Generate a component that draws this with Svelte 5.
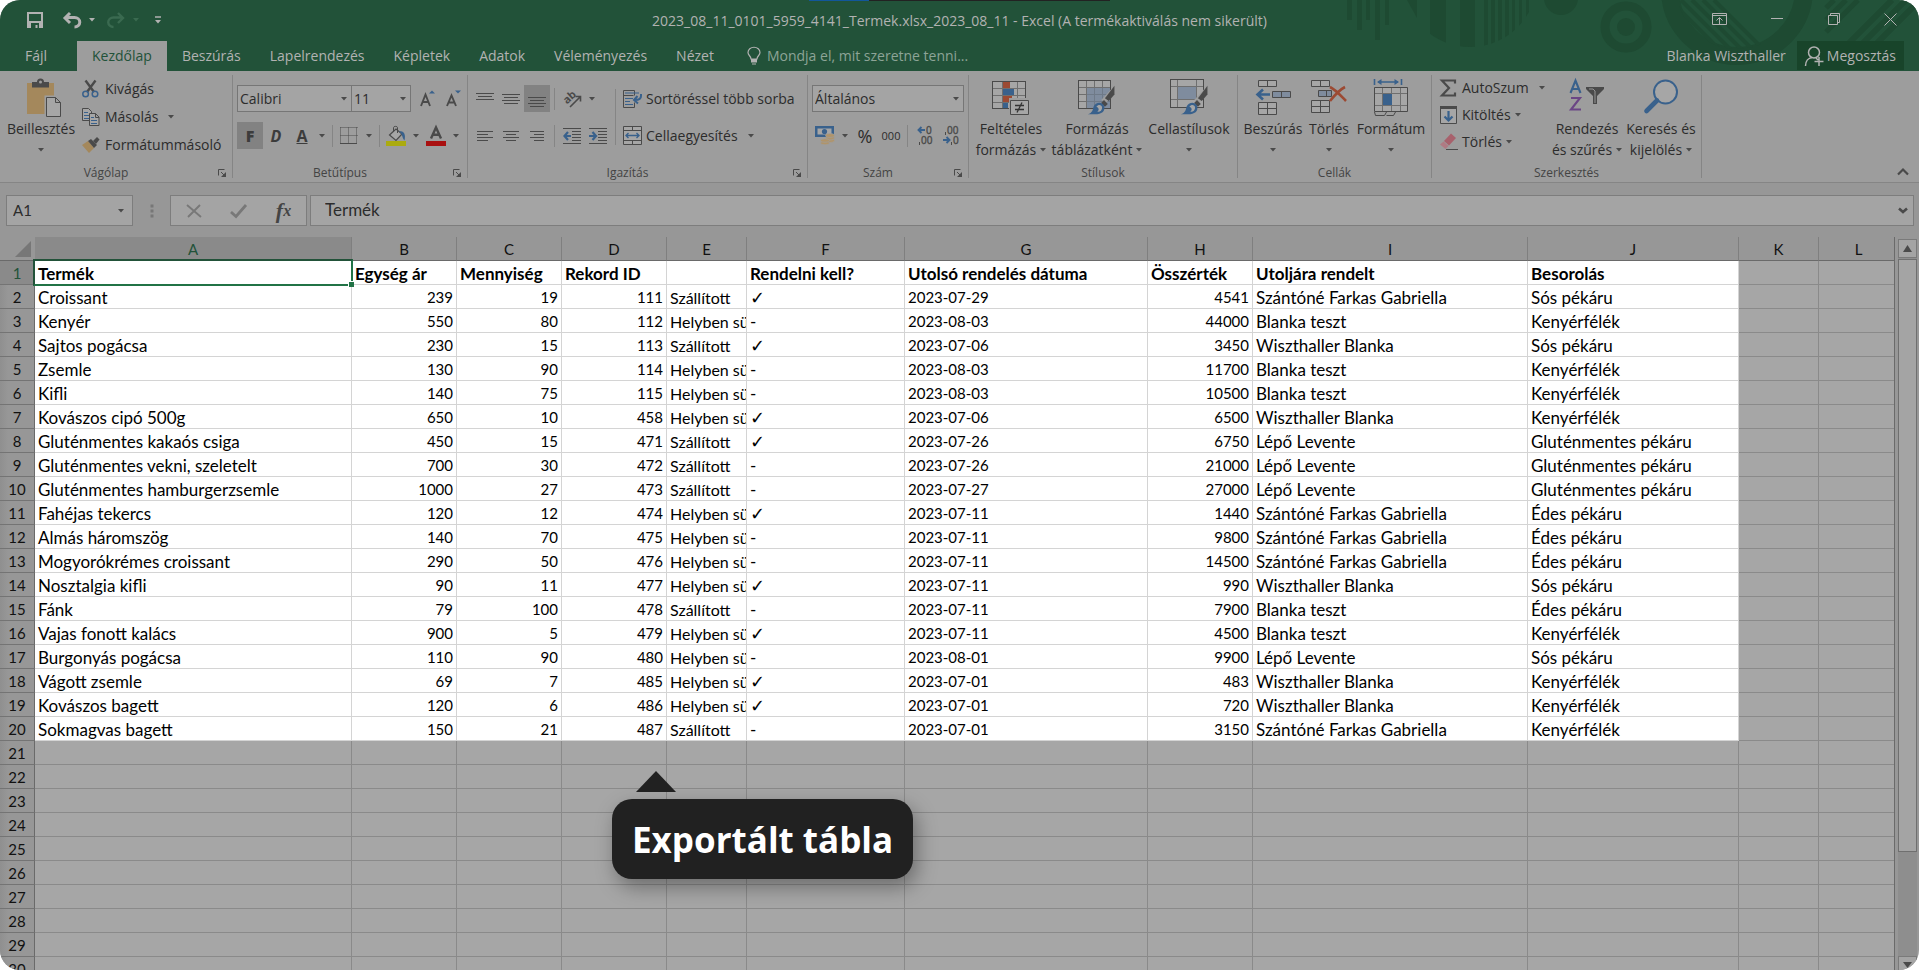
<script>
  const D = '#4a4a4a';
  const B = '#39618c';
  const C = '#a6a6a6';
  const cellGrid = (w, h, cols, rows, sx, sy) => {
    let p = '';
    for (let i = 1; i < cols; i++) p += `M${0.5 + i * sx} 1v${h - 2}`;
    for (let i = 1; i < rows; i++) p += `M1 ${0.5 + i * sy}h${w - 2}`;
    return `<rect x="0.5" y="0.5" width="${w - 1}" height="${h - 1}" fill="${C}" stroke="${D}"/><path d="${p}" stroke="#6f6f6f" fill="none"/>`;
  };
  const hLines = (list) =>
    `<path d="${list.map(([x, y, w]) => `M${x} ${y + 0.5}h${w}`).join('')}" stroke="${D}" fill="none"/>`;
  const brush = `<path d="M17 18L29 5l2 -3v10l-9 9z" fill="#9d9d9d"/><path d="M21 16L31 3v9l-6 7z" fill="${D}"/><path d="M17 21l3 -3 4 4 -3 3z" fill="${D}"/><path d="M3 33c5 -2 5 -4 6 -8c2 -5 9 -6 11 -1c2 6 -3 9 -9 9z" fill="${B}"/><path d="M12 25c2 -3 6 -2 6 1c0 3 -3 5 -5 4c2 -1 2 -4 -1 -5z" fill="${C}"/>`;

  const icons = {
    save: [16, 16, `<path d="M1 1h14v14H1z" stroke="#b2b2b2" stroke-width="2" fill="none"/><path d="M1 9h14v6H1z" fill="#b2b2b2"/><path d="M4 11h8v5h-1.500v-3h-2v3H4z" fill="#225239"/>`],
    undo: [18, 16, `<path d="M7 1L2 6l5 5M2 5.500h9.500a5 4.500 0 0 1 0 9.500" stroke="#b2b2b2" stroke-width="3" fill="none"/>`],
    redo: [18, 16, `<path d="M11 1l5 5 -5 5M16 5.500H6.500a5 4.500 0 0 0 0 9.500" stroke="#3a6a50" stroke-width="2.400" fill="none"/>`],
    custom: [6, 8, `<path d="M0 1h6" stroke="#b2b2b2" stroke-width="1.500"/><path d="M0 4h6l-3 3.500z" fill="#b2b2b2"/>`],
    display: [16, 13, `<path d="M0.500 0.500h14v11H0.500zM0.500 2.500h14M7.500 11V5M4.500 7.500l3 -3 3 3" stroke="#b2b2b2" fill="none"/>`],
    min: [12, 12, `<path d="M0 5.500h12" stroke="#b2b2b2"/>`],
    restore: [12, 12, `<path d="M0.500 2.500h9v9h-9zM2.500 2.500v-2h9v9h-2" stroke="#b2b2b2" fill="none"/>`],
    close: [13, 13, `<path d="M0.500 0.500l12 12M12.500 0.500l-12 12" stroke="#b2b2b2" fill="none"/>`],
    bulb: [14, 18, `<path d="M4 12c0 -3 -3 -3.500 -3 -6.500a5.700 5 0 0 1 12 0c0 3 -3 3.500 -3 6.500z" stroke="#b2b2b2" stroke-width="1.200" fill="none"/><path d="M4 12h6v3.500H4zM5 16.500h4v1H5z" fill="#b2b2b2"/>`],
    person: [20, 20, `<circle cx="10" cy="6.500" r="5.500" stroke="#b2b2b2" stroke-width="1.500" fill="none"/><path d="M1.500 20c0 -5 3 -8 6.500 -8.500M12 12l2 2M15 11v9M10.500 15.500h9" stroke="#b2b2b2" stroke-width="1.500" fill="none"/>`],
    paste: [40, 38, `<g transform="translate(6 0)"><rect y="4" width="27" height="31" fill="#a4885c"/><path d="M5 3h5a3.500 3.500 0 0 1 7 0h5v5.500H5z" fill="${D}"/><circle cx="13.500" cy="3" r="1.500" fill="#9d9d9d"/><path d="M17.500 16.500h12l5 5V38h-17z" fill="#9d9d9d"/><path d="M19.500 18.500h9l5 5v14h-14zM28.500 18.500v5h5" fill="${C}" stroke="${D}"/></g>`],
    cut: [17, 18, `<path d="M3.500 0.500L12 12M13.500 0.500L5 12" stroke="${D}" stroke-width="2.400"/><circle cx="3.600" cy="14" r="2.800" stroke="${B}" stroke-width="1.500" fill="none"/><circle cx="13" cy="14" r="2.800" stroke="${B}" stroke-width="1.500" fill="none"/>`],
    copy: [18, 18, `<path d="M0.500 0.500h6l3 3v9h-9z" fill="${C}" stroke="${D}"/><path d="M2 4.500h4M2 7.500h5M2 10.500h5" stroke="${B}"/><path d="M7.500 5.500h6l3.500 3.500v8.500H7.500zM13.500 5.500v4H17" fill="${C}" stroke="${D}"/><path d="M9 9.500h3M9 12.500h6M9 15.500h6" stroke="${B}"/>`],
    painter: [18, 16, `<path d="M0 8l6 -4 6 7 -5 5z" fill="#a4885c"/><path d="M6 4l3 -2 6 6 -3 3z" fill="${D}"/><path d="M11 4l4 -4 2.500 2.500L14 7z" fill="${D}"/>`],
    growA: [15, 17, `<path d="M1 16L5.500 4.500 10 16M2.500 12h6" stroke="${D}" stroke-width="1.900" fill="none"/><path d="M9 3.500h6L12 0.500z" fill="${B}"/>`],
    shrinkA: [15, 17, `<path d="M1 16L5.500 5.500 10 16M2.500 12.500h6" stroke="${D}" stroke-width="1.900" fill="none"/><path d="M9 0.500h6L12 3.500z" fill="${B}"/>`],
    borders: [18, 18, `<path d="M0.500 0.500h17M0.500 0.500v16M16.500 0.500v16M8.500 0.500v16M0.500 8.500h17" stroke="${D}" stroke-dasharray="1 1" fill="none"/><path d="M0 16.500h17" stroke="${D}"/>`],
    fill: [20, 20, `<path d="M3.500 9L10 3l6 5 -6 6.500z" stroke="${D}" stroke-width="1.200" fill="${C}"/><path d="M7.500 6V1.500c0 -1.500 4 -1.500 4 0V7" stroke="${D}" fill="none"/><path d="M13 5c5 0 7 3 5.500 9.500C16 12 17 9 13 5z" fill="${B}"/><path d="M0 15h20v5H0z" fill="#abab10"/>`],
    fontColor: [20, 20, `<path d="M5 12.500L10 1.500l5 11M7 8.800h6" stroke="${D}" stroke-width="2.400" fill="none"/><path d="M0 15h20v5H0z" fill="#a91010"/>`],
    alTop: [18, 18, hLines([[0, 3, 18], [2, 6, 14], [0, 9, 18]])],
    alMid: [18, 18, hLines([[0, 4, 18], [2, 7, 14], [0, 10, 18], [2, 13, 14]])],
    alBot: [18, 18, hLines([[0, 7, 18], [2, 10, 14], [0, 13, 18], [2, 16, 14]])],
    alLeft: [16, 14, hLines([[0, 2, 16], [0, 5, 11], [0, 8, 16], [0, 11, 11]])],
    alCen: [16, 14, hLines([[0, 2, 16], [3, 5, 10], [0, 8, 16], [3, 11, 10]])],
    alRight: [16, 14, hLines([[1, 2, 14], [5, 5, 10], [1, 8, 14], [5, 11, 10]])],
    orient: [19, 18, `<text x="1" y="11" font-size="11" font-weight="700" font-family="Noto Sans, sans-serif" fill="${D}" transform="rotate(-42 7 9)">ab</text><path d="M7 17L17 7M12.500 6.500H17.500V11.500" stroke="${D}" stroke-width="1.600" fill="none"/>`],
    outdent: [18, 18, hLines([[0, 1, 18], [9, 4, 9], [9, 7, 9], [9, 10, 9], [9, 13, 9], [0, 16, 18]]) + `<path d="M8 9H2M5 5L1.500 9 5 13" stroke="${B}" stroke-width="2.200" fill="none"/>`],
    indent: [18, 18, hLines([[0, 1, 18], [9, 4, 9], [9, 7, 9], [9, 10, 9], [9, 13, 9], [0, 16, 18]]) + `<path d="M0 9h6M3.500 5L7 9 3.500 13" stroke="${B}" stroke-width="2.200" fill="none"/>`],
    wrap: [20, 18, `<path d="M0.500 0.500h11v5M0.500 0.500v17h11v-5" stroke="${D}" fill="none"/><path d="M0.500 5.500h10" stroke="${D}"/><path d="M2 3h14M2 8.500h8M2 11.500h5M2 14.500h8" stroke="${B}" stroke-width="1.200"/><path d="M18 4v2c0 3 -2 4 -6 4M14.500 6L11 10l4 3.500" stroke="${B}" stroke-width="2" fill="none"/>`],
    merge: [19, 19, `<path d="M0.500 0.500h18v18H0.500zM0.500 4.500h18M0.500 14.500h18M9.500 0.500v4M9.500 14.500v4" stroke="${D}" fill="${C}"/><path d="M3 9.500h13M5.500 7L3 9.500 5.500 12M13.500 7L16 9.500 13.500 12" stroke="${B}" stroke-width="1.400" fill="none"/>`],
    money: [20, 19, `<rect width="19" height="11" fill="${B}"/><path d="M2.500 2.500h14v6h-14z" fill="${C}"/><circle cx="9.500" cy="5.500" r="2.600" fill="${B}"/><g fill="#b0946a" stroke="#9d9d9d" stroke-width="0.700"><ellipse cx="15" cy="14.500" rx="4.500" ry="2"/><ellipse cx="15" cy="12" rx="4.500" ry="2"/><ellipse cx="15" cy="9.500" rx="4.500" ry="2"/><ellipse cx="10" cy="17" rx="4.500" ry="1.800"/><ellipse cx="10" cy="14.500" rx="4.500" ry="1.800"/></g>`],
    decInc: [17, 19, `<text x="9" y="8" font-size="10" font-family="Noto Sans, sans-serif" fill="${D}" stroke="${D}" stroke-width="0.300">0</text><text x="4" y="18" font-size="10" font-family="Noto Sans, sans-serif" fill="${D}" stroke="${D}" stroke-width="0.300">00</text><path d="M8 4H2M4.500 1L1.500 4l3 3" stroke="${B}" stroke-width="1.900" fill="none"/><path d="M2.500 16v3" stroke="${D}"/>`],
    decDec: [17, 19, `<text x="4" y="8" font-size="10" font-family="Noto Sans, sans-serif" fill="${D}" stroke="${D}" stroke-width="0.300">00</text><text x="10" y="18" font-size="10" font-family="Noto Sans, sans-serif" fill="${D}" stroke="${D}" stroke-width="0.300">0</text><path d="M0 14h6M3.500 11l3 3 -3 3" stroke="${B}" stroke-width="1.900" fill="none"/><path d="M2.500 6v3M8.500 16v3" stroke="${D}"/>`],
    cond: [38, 36, `<g transform="translate(0 2)">` + cellGrid(34, 28, 1, 1, 1, 1) + `<path d="M10.500 1v26M17.500 1v26M25.500 1v26M1 7.500h32M1 14.500h32M1 21.500h32" stroke="#6f6f6f"/><path d="M11 1h7v6h-7zM11 15h9v6h-9z" fill="#9c4a33"/><path d="M11 8h11v6H11zM11 22h5v5h-5z" fill="${B}"/></g><path d="M17 19h21v17H17z" fill="#9d9d9d"/><path d="M18.500 21.500h18v14h-18z" fill="${C}" stroke="${D}"/><path d="M23 26.500h9M23 30.500h9M30 23.500l-5 10" stroke="#333" stroke-width="1.300"/>`],
    table: [38, 36, `<g transform="translate(0 1)">` + cellGrid(33, 29, 4, 4, 8, 7) + `<path d="M9 8h23v20H9z" fill="#7f8c9e"/><path d="M16.500 8v20M24.500 8v20M9 14.500h23M9 21.500h23" stroke="#6f7a88"/></g><g transform="translate(7 4) scale(0.950)">${brush}</g>`],
    styles: [38, 36, `<rect x="0.500" y="0.500" width="33" height="28" fill="${C}" stroke="${D}"/><path d="M7.500 1v27M26.500 1v27M1 7.500h32M1 20.500h32" stroke="#6f6f6f"/><path d="M8 8h18v12H8z" fill="#7f8c9e"/><g transform="translate(8 4) scale(0.950)">${brush}</g>`],
    insert: [38, 36, `<g fill="${C}" stroke="${D}"><path d="M4.500 1.500h18v6h-18zM13.500 1.500v6M4.500 23.500h18v12h-18zM13.500 23.500v12M4.500 29.500h18"/><path d="M18.500 12.500h18v6h-18zM27.500 12.500v6" fill="#7f8c9e"/></g><path d="M16 15.500H4M9 10.500L3.500 15.500 9 20.500" stroke="${B}" stroke-width="2.600" fill="none"/>`],
    del: [36, 36, `<g fill="${C}" stroke="${D}"><path d="M0.500 1.500h18v6h-18zM9.500 1.500v6M0.500 21.500h18v12h-18zM9.500 21.500v12M0.500 27.500h18"/><path d="M7.500 11.500h13v6h-13zM15.500 11.500v6" fill="#7f8c9e"/></g><path d="M19 8c6 3 11 9 16 14M34 8c-6 3 -11 9 -15 14" stroke="#9c4a33" stroke-width="2.600" fill="none"/>`],
    format: [36, 38, `<path d="M1.500 0v6M28.500 0v6M5 3h20" stroke="${B}" stroke-width="1.600"/><path d="M8.500 0L4 3l4.500 3zM21.500 0L26 3l-4.500 3z" fill="${B}"/><path d="M1.500 33l1 3.500h9l2 -3.500M13.500 36.500h7l2 -3.500" stroke="${D}" fill="none"/><path d="M1.500 8.500h33v24h-33z" fill="${C}" stroke="${D}"/><path d="M9.500 9v23M18.500 9v23M27.500 9v23M2 14.500h32M2 26.500h32" stroke="#6f6f6f"/><path d="M10 15h9v11h-9z" fill="${B}"/>`],
    sum: [17, 18, `<path d="M15 4.500V1.500H2l7 7.500 -7 7.500h13v-3" stroke="${D}" stroke-width="2.200" fill="none"/>`],
    fillDown: [17, 18, `<path d="M0.500 1.500h16v16h-16z" fill="${C}" stroke="${D}"/><path d="M0 0h17v3H0z" fill="${D}"/><path d="M8.500 5v9M4.500 10.500l4 4 4 -4" stroke="${B}" stroke-width="2.200" fill="none"/>`],
    eraser: [18, 17, `<path d="M4 8l7 -7.500 5 4.500 -7 7.500z" fill="#a8616c"/><path d="M0 11.500L3.500 8.500l5 4.500 -3 3z" fill="#b07a83"/><path d="M6 16.500h12" stroke="${D}"/>`],
    sort: [36, 34, `<path d="M1.500 14L6.500 1.500 11.500 14M3 10h7" stroke="${B}" stroke-width="2.100" fill="none"/><path d="M2 19h9L2 30.500h10" stroke="#6b4685" stroke-width="2.100" fill="none"/><path d="M17 8h18v2l-7 7v8h-4v-8l-7 -7z" fill="${D}"/><path d="M20 10h4l2 2v12" stroke="#9d9d9d" stroke-width="0.900" fill="none"/>`],
    find: [36, 36, `<circle cx="22.500" cy="13" r="11.500" stroke="${B}" stroke-width="2" fill="${C}"/><path d="M14 21.500L3.500 32" stroke="${B}" stroke-width="4.600" stroke-linecap="round"/>`],
    caret: [6, 4, `<path d="M0 0h6L3 3.500z" fill="${D}"/>`],
    caretLight: [6, 4, `<path d="M0 0h6L3 3.500z" fill="#b2b2b2"/>`],
    caretDim: [6, 4, `<path d="M0 0h6L3 3.500z" fill="#3a6a50"/>`],
    launcher: [8, 8, `<path d="M0.500 6.500v-6h6M3 3l4 4" stroke="${D}" fill="none"/><path d="M8 3v5H3z" fill="${D}"/>`],
    collapse: [12, 8, `<path d="M1 6.500L6 1.500l5 5" stroke="${D}" stroke-width="2.200" fill="none"/>`],
    expand: [10, 8, `<path d="M1 1.500L5 5l4 -3.500" stroke="${D}" stroke-width="2.600" fill="none"/>`],
    dots: [4, 14, `<path d="M0.500 0.500h3v3h-3zM0.500 5.500h3v3h-3zM0.500 10.500h3v3h-3z" fill="#777"/>`],
    cancel: [16, 14, `<path d="M1 1l14 12M14 1L2 13" stroke="#787878" stroke-width="1.900" fill="none"/>`],
    accept: [17, 14, `<path d="M1 8l5 4.500L16 1" stroke="#787878" stroke-width="2.800" fill="none"/>`],
    up: [10, 7, `<path d="M0 7h9L4.500 0z" fill="${D}"/>`],
    down: [10, 7, `<path d="M0 0h9L4.500 6z" fill="${D}"/>`]
  };

  const tabs = ['Beszúrás', 'Lapelrendezés', 'Képletek', 'Adatok', 'Véleményezés', 'Nézet'];
  const windowButtons = [
    ['display', 'Menüszalag megjelenítése'],
    ['min', 'Kis méret'],
    ['restore', 'Előző méret'],
    ['close', 'Bezárás']
  ];
  const columns = [
    ['A', 317], ['B', 105], ['C', 105], ['D', 105], ['E', 80], ['F', 158],
    ['G', 243], ['H', 105], ['I', 275], ['J', 211], ['K', 80], ['L', 0]
  ];
  const headings = ['Termék', 'Egység ár', 'Mennyiség', 'Rekord ID', '', 'Rendelni kell?', 'Utolsó rendelés dátuma', 'Összérték', 'Utoljára rendelt', 'Besorolás'];
  const S = 'Szállított';
  const H = 'Helyben sü';
  const SG = 'Szántóné Farkas Gabriella';
  const BT = 'Blanka teszt';
  const WB = 'Wiszthaller Blanka';
  const LL = 'Lépő Levente';
  const records = [
    ['Croissant', 239, 19, 111, S, '✓', '2023-07-29', 4541, SG, 'Sós pékáru'],
    ['Kenyér', 550, 80, 112, H, '-', '2023-08-03', 44000, BT, 'Kenyérfélék'],
    ['Sajtos pogácsa', 230, 15, 113, S, '✓', '2023-07-06', 3450, WB, 'Sós pékáru'],
    ['Zsemle', 130, 90, 114, H, '-', '2023-08-03', 11700, BT, 'Kenyérfélék'],
    ['Kifli', 140, 75, 115, H, '-', '2023-08-03', 10500, BT, 'Kenyérfélék'],
    ['Kovászos cipó 500g', 650, 10, 458, H, '✓', '2023-07-06', 6500, WB, 'Kenyérfélék'],
    ['Gluténmentes kakaós csiga', 450, 15, 471, S, '✓', '2023-07-26', 6750, LL, 'Gluténmentes pékáru'],
    ['Gluténmentes vekni, szeletelt', 700, 30, 472, S, '-', '2023-07-26', 21000, LL, 'Gluténmentes pékáru'],
    ['Gluténmentes hamburgerzsemle', 1000, 27, 473, S, '-', '2023-07-27', 27000, LL, 'Gluténmentes pékáru'],
    ['Fahéjas tekercs', 120, 12, 474, H, '✓', '2023-07-11', 1440, SG, 'Édes pékáru'],
    ['Almás háromszög', 140, 70, 475, H, '-', '2023-07-11', 9800, SG, 'Édes pékáru'],
    ['Mogyorókrémes croissant', 290, 50, 476, H, '-', '2023-07-11', 14500, SG, 'Édes pékáru'],
    ['Nosztalgia kifli', 90, 11, 477, H, '✓', '2023-07-11', 990, WB, 'Sós pékáru'],
    ['Fánk', 79, 100, 478, S, '-', '2023-07-11', 7900, BT, 'Édes pékáru'],
    ['Vajas fonott kalács', 900, 5, 479, H, '✓', '2023-07-11', 4500, BT, 'Kenyérfélék'],
    ['Burgonyás pogácsa', 110, 90, 480, H, '-', '2023-08-01', 9900, LL, 'Sós pékáru'],
    ['Vágott zsemle', 69, 7, 485, H, '✓', '2023-07-01', 483, WB, 'Kenyérfélék'],
    ['Kovászos bagett', 120, 6, 486, H, '✓', '2023-07-01', 720, WB, 'Kenyérfélék'],
    ['Sokmagvas bagett', 150, 21, 487, S, '-', '2023-07-01', 3150, SG, 'Kenyérfélék']
  ];
  const sheet = [headings, ...records];
  const rowCount = 30;
</script>

{#snippet icon(name)}
  <svg width={icons[name][0]} height={icons[name][1]} viewBox="0 0 {icons[name][0]} {icons[name][1]}" aria-hidden="true">{@html icons[name][2]}</svg>
{/snippet}

{#snippet tool(name, label, on = false)}
  <button class="tool" class:on aria-label={label}>{@render icon(name)}</button>
{/snippet}

{#snippet caret()}
  <button class="caret" aria-label="További lehetőségek">{@render icon('caret')}</button>
{/snippet}

{#snippet command(name, text, more = '')}
  <button class="command {more}">
    <span class="slot">{@render icon(name)}</span>
    <span>{text}</span>
    {#if more}{@render icon('caret')}{/if}
  </button>
{/snippet}

{#snippet big(name, first, second = '', size = '')}
  <button class="big {size}">
    <span class="art">{@render icon(name)}</span>
    <span class="line">{first}</span>
    <span class="line second">{second}{@render icon('caret')}</span>
  </button>
{/snippet}

{#snippet caption(text, launcher = false)}
  <footer class="caption">
    <span>{text}</span>
    {#if launcher}<button class="launcher" aria-label="{text} beállításai">{@render icon('launcher')}</button>{/if}
  </footer>
{/snippet}

<div class="window">
  <header class="top">
    <svg class="pattern" width="580" height="71" viewBox="1339 0 580 71" aria-hidden="true">
      <defs>
        <clipPath id="disc"><circle cx="1470" cy="-20" r="67" /></clipPath>
        <clipPath id="ring"><circle cx="1737" cy="-11" r="60" /></clipPath>
      </defs>
      <g fill="#1e4a32">
        <path d="M1347 0h5v20h-5zM1357 0h5v30h-5zM1366 0h4v20h-4zM1375 0h5v40h-5zM1385 0h4v25h-4zM1407 0h10v18z" />
        <path clip-path="url(#disc)" d="M1430 0h16v60h-16zM1460 0h15v60h-15zM1484 0h4v60h-4zM1491 0h4v60h-4zM1498 0h4v60h-4zM1505 0h4v60h-4zM1512 0h3v60h-3zM1519 0h3v60h-3zM1526 0h3v60h-3z" />
        <circle cx="1561" cy="-2" r="17" />
        <circle cx="1626" cy="27" r="9" />
      </g>
      <g fill="none" stroke="#1e4a32">
        <circle cx="1626" cy="27" r="21" stroke-width="9" />
        <circle cx="1737" cy="-11" r="67" stroke-width="18" />
        <path clip-path="url(#ring)" d="M1670 0l80 80M1681 0l80 80M1692 0l80 80M1703 0l80 80M1714 0l80 80" stroke-width="4" />
        <path d="M1826 8l8 -8M1826 20l20 -20M1826 32l32 -32" stroke-width="5" />
        <path d="M1842 50l50 -50M1856 50l50 -50M1870 50l49 -49" stroke-width="6" />
      </g>
    </svg>
    <div class="strip"></div>

    <div class="titlebar">
      <nav class="quick" aria-label="Gyorselérési eszköztár">
        <button aria-label="Mentés">{@render icon('save')}</button>
        <button aria-label="Visszavonás">{@render icon('undo')}{@render icon('caretLight')}</button>
        <button aria-label="Ismét">{@render icon('redo')}{@render icon('caretDim')}</button>
        <button aria-label="Testreszabás">{@render icon('custom')}</button>
      </nav>
      <h1>2023_08_11_0101_5959_4141_Termek.xlsx_2023_08_11 - Excel (A termékaktiválás nem sikerült)</h1>
      <div class="controls">
        {#each windowButtons as [name, label]}
          <button aria-label={label}>{@render icon(name)}</button>
        {/each}
      </div>
    </div>

    <div class="tabs">
      <button class="file">Fájl</button>
      <button class="active">Kezdőlap</button>
      {#each tabs as tab}
        <button>{tab}</button>
      {/each}
      <button class="tell">{@render icon('bulb')}Mondja el, mit szeretne tenni...</button>
      <span class="user">Blanka Wiszthaller</span>
      <button class="share">{@render icon('person')}Megosztás</button>
    </div>
  </header>

  <div class="ribbon">
    <section class="group clipboard">
      <div class="body">
        {@render big('paste', 'Beillesztés', '', 'w76')}
        <div class="stack tall">
          {@render command('cut', 'Kivágás')}
          {@render command('copy', 'Másolás', 'far')}
          {@render command('painter', 'Formátummásoló')}
        </div>
      </div>
      {@render caption('Vágólap', true)}
    </section>

    <section class="group font">
      <div class="body rows">
        <div class="row">
          <span class="combo family">
            <select aria-label="Betűtípus"><option>Calibri</option></select>{@render icon('caret')}
          </span>
          <span class="combo size">
            <select aria-label="Betűméret"><option>11</option></select>{@render icon('caret')}
          </span>
          {@render tool('growA', 'Betűméret növelése')}
          {@render tool('shrinkA', 'Betűméret csökkentése')}
        </div>
        <div class="row">
          <button class="tool on letter"><b>F</b></button>
          <button class="tool letter"><i>D</i></button>
          <button class="tool letter"><u>A</u></button>
          {@render caret()}
          <i class="rule"></i>
          {@render tool('borders', 'Szegélyek')}
          {@render caret()}
          <i class="rule"></i>
          {@render tool('fill', 'Kitöltőszín')}
          {@render caret()}
          {@render tool('fontColor', 'Betűszín')}
          {@render caret()}
        </div>
      </div>
      {@render caption('Betűtípus', true)}
    </section>

    <section class="group align">
      <div class="body">
        <div class="rows">
          <div class="row">
            {@render tool('alTop', 'Felülre igazítás')}
            {@render tool('alMid', 'Középre igazítás függőlegesen')}
            {@render tool('alBot', 'Alulra igazítás', true)}
            <i class="rule"></i>
            {@render tool('orient', 'Tájolás')}
            {@render caret()}
          </div>
          <div class="row">
            {@render tool('alLeft', 'Balra igazítás')}
            {@render tool('alCen', 'Középre igazítás')}
            {@render tool('alRight', 'Jobbra igazítás')}
            <i class="rule"></i>
            {@render tool('outdent', 'Behúzás csökkentése')}
            {@render tool('indent', 'Behúzás növelése')}
          </div>
        </div>
        <i class="rule long"></i>
        <div class="rows">
          <div class="row">{@render command('wrap', 'Sortöréssel több sorba')}</div>
          <div class="row">{@render command('merge', 'Cellaegyesítés', 'far')}</div>
        </div>
      </div>
      {@render caption('Igazítás', true)}
    </section>

    <section class="group number">
      <div class="body rows">
        <div class="row">
          <span class="combo format">
            <select aria-label="Számformátum"><option>Általános</option></select>{@render icon('caret')}
          </span>
        </div>
        <div class="row">
          {@render tool('money', 'Könyvelési számformátum')}
          {@render caret()}
          <button class="tool percent">%</button>
          <button class="tool zeros">000</button>
          <i class="rule"></i>
          {@render tool('decInc', 'Tizedeshelyek növelése')}
          {@render tool('decDec', 'Tizedeshelyek csökkentése')}
        </div>
      </div>
      {@render caption('Szám', true)}
    </section>

    <section class="group looks">
      <div class="body">
        {@render big('cond', 'Feltételes', 'formázás', 'w76')}
        {@render big('table', 'Formázás', 'táblázatként', 'w96')}
        {@render big('styles', 'Cellastílusok', '', 'w88')}
      </div>
      {@render caption('Stílusok')}
    </section>

    <section class="group cells">
      <div class="body">
        {@render big('insert', 'Beszúrás', '', 'w60')}
        {@render big('del', 'Törlés', '', 'w52')}
        {@render big('format', 'Formátum', '', 'w72')}
      </div>
      {@render caption('Cellák')}
    </section>

    <section class="group edit">
      <div class="body">
        <div class="stack">
          {@render command('sum', 'AutoSzum', 'far')}
          {@render command('fillDown', 'Kitöltés', 'near')}
          {@render command('eraser', 'Törlés', 'near')}
        </div>
        {@render big('sort', 'Rendezés', 'és szűrés', 'w72')}
        {@render big('find', 'Keresés és', 'kijelölés', 'w76')}
      </div>
      {@render caption('Szerkesztés')}
    </section>

    <button class="collapse" aria-label="Menüszalag összecsukása">{@render icon('collapse')}</button>
  </div>

  <div class="formula">
    <span class="box name">
      <input aria-label="Név mező" value="A1" />{@render icon('caret')}
    </span>
    <span class="dots">{@render icon('dots')}</span>
    <span class="box actions">
      <button aria-label="Mégse">{@render icon('cancel')}</button>
      <button aria-label="Beírás">{@render icon('accept')}</button>
      <button class="fx"><i>f</i><i class="x">x</i></button>
    </span>
    <span class="box value">
      <input aria-label="Szerkesztőléc" value="Termék" />{@render icon('expand')}
    </span>
  </div>

  <main class="area">
    <div class="sheet">
      <table>
        <colgroup>
          <col style:width="35px" />
          {#each columns as [, width]}
            <col style:width={width ? `${width}px` : 'auto'} />
          {/each}
        </colgroup>
        <thead>
          <tr>
            <th class="corner"><svg width="16" height="16" viewBox="0 0 16 16" aria-hidden="true"><path d="M16 0v16H0z" fill="#777" /></svg></th>
            {#each columns as [letter], c}
              <th class="letter-head" class:picked={c === 0} scope="col">{letter}</th>
            {/each}
          </tr>
        </thead>
        <tbody>
          {#each { length: rowCount } as _, r}
            <tr>
              <th class:picked={r === 0} scope="row">{r + 1}</th>
              {#each columns as _, c}
                {@const cell = sheet[r]?.[c]}
                <td
                  class:lit={r < 20 && c < 10}
                  class:head={r === 0}
                  class:num={typeof cell === 'number'}
                  class:date={r > 0 && c === 6}
                  class:source={c === 4}
                  class:check={cell === '✓'}
                  class:current={r === 0 && c === 0}
                >{cell ?? ''}</td>
              {/each}
            </tr>
          {/each}
        </tbody>
      </table>
      <aside class="tip">Exportált tábla</aside>
    </div>
    <div class="scroll">
      <button aria-label="Felfelé">{@render icon('up')}</button>
      <div class="track"><div class="thumb"></div></div>
      <button aria-label="Lefelé">{@render icon('down')}</button>
    </div>
  </main>
</div>

<style>
  :global(body) {
    background: #fff;
  }
  .window {
    display: flex;
    flex-direction: column;
    height: 100vh;
    overflow: hidden;
    border-radius: 20px;
    background: #979797;
    color: #2c2c2c;
    font: 14px/20px "Open Sans", "Noto Sans", sans-serif;
  }
  .window * {
    box-sizing: border-box;
  }
  button,
  input,
  select {
    margin: 0;
    padding: 0;
    border: 0;
    background: none;
    color: inherit;
    font: inherit;
    white-space: nowrap;
  }
  button {
    display: flex;
    align-items: center;
    justify-content: center;
  }
  svg {
    display: block;
    flex: none;
    overflow: visible;
  }

  .top {
    position: relative;
    flex: none;
    background: #225239;
    color: #b2b2b2;
  }
  .pattern {
    position: absolute;
    top: 0;
    right: 0;
    overflow: hidden;
  }
  .strip {
    position: absolute;
    top: 0;
    left: 809px;
    width: 301px;
    height: 1px;
    background: linear-gradient(90deg, #12579b 60px, #222 60px);
  }
  .titlebar,
  .tabs {
    position: relative;
    display: flex;
  }
  .titlebar {
    height: 41px;
    justify-content: space-between;
  }
  .quick,
  .controls {
    display: flex;
    flex: 1;
  }
  .quick {
    gap: 20px;
    padding-bottom: 2px;
  }
  .quick button {
    gap: 8px;
  }
  .quick button:first-child {
    margin-left: 27px;
  }
  .quick button:nth-child(3) {
    margin-left: -8px;
  }
  .quick button:last-child {
    margin-left: -4px;
  }
  .controls {
    justify-content: flex-end;
  }
  .controls button {
    width: 57px;
    height: 38px;
  }
  h1 {
    margin: 0;
    font-size: 14px;
    font-weight: 400;
    line-height: 41px;
  }
  .tabs {
    gap: 1px;
    height: 30px;
    align-items: stretch;
  }
  .tabs button {
    padding: 0 14px;
  }
  .tabs .file {
    width: 76px;
    padding: 0 4px 0 0;
  }
  .tabs .active {
    padding: 0 15px;
    background: #9d9d9d;
    color: #225239;
  }
  .tabs .tell {
    gap: 6px;
    margin-left: 4px;
    color: #8da497;
  }
  .user {
    margin: 0 10px 0 auto;
    line-height: 30px;
  }
  .tabs .share {
    gap: 3px;
    margin: 0 15px 1px 0;
    padding: 0 8px 0 7px;
    background: #18442a;
  }

  .ribbon {
    display: flex;
    flex: none;
    height: 112px;
    border-bottom: 1px solid #858585;
    background: #9d9d9d;
  }
  .group {
    display: flex;
    flex: none;
    flex-direction: column;
    margin: 4px 0;
    border-right: 1px solid #858585;
  }
  .clipboard { width: 233px; }
  .font { width: 235px; }
  .align { width: 340px; }
  .number { width: 161px; }
  .looks { width: 269px; }
  .cells { width: 194px; }
  .edit { width: 270px; }
  .body {
    display: flex;
    flex: 1;
  }
  .body.rows,
  .rows {
    display: flex;
    flex-direction: column;
    gap: 10px;
    padding: 10px 4px 0;
  }
  .row {
    display: flex;
    align-items: center;
    height: 27px;
  }
  .align .rows:last-child {
    padding-left: 7px;
  }
  .clipboard .body {
    padding-left: 3px;
  }
  .caption {
    display: flex;
    align-items: center;
    justify-content: center;
    height: 17px;
    margin-bottom: -3px;
    color: #444;
    font-size: 12px;
    line-height: 16px;
  }
  .caption span {
    flex: 1;
    text-align: center;
  }
  .launcher {
    width: 20px;
    height: 16px;
  }
  .tool {
    width: 26px;
    height: 27px;
    flex: none;
  }
  .on {
    background: #828282;
  }
  .letter {
    color: #3c3c3c;
    font-size: 16px;
    font-weight: 700;
  }
  .caret {
    width: 14px;
    height: 27px;
    flex: none;
  }
  .rule {
    flex: none;
    width: 1px;
    height: 22px;
    margin: 0 4px;
    background: #858585;
  }
  .rule.long {
    height: 56px;
    margin: 14px 0 0;
  }
  .font .rule {
    margin: 0 3px;
  }
  .percent {
    font-size: 18px;
  }
  .zeros {
    font-size: 11px;
  }
  .number .rule {
    margin: 0 4px 0 3px;
  }
  .combo {
    display: flex;
    align-items: center;
    flex: none;
    height: 27px;
    padding: 0 4px 0 2px;
    border: 1px solid #767676;
    background: #a4a4a4;
  }
  .combo select {
    flex: 1;
    min-width: 0;
    height: 24px;
    appearance: none;
  }
  .family { width: 115px; }
  .size {
    width: 60px;
    margin: 0 3px 0 -1px;
  }
  .format { width: 152px; }

  .stack {
    display: flex;
    flex-direction: column;
    align-items: flex-start;
    padding-left: 3px;
  }
  .stack .command {
    height: 27px;
  }
  .stack.tall .command {
    height: 28px;
  }
  .edit .stack {
    width: 119px;
    margin-top: -1px;
    padding-left: 8px;
  }
  .command {
    gap: 4px;
  }
  .command .slot {
    width: 19px;
  }
  .edit .slot {
    width: 18px;
  }
  .far > :global(svg) {
    margin-left: 6px;
  }
  .big {
    flex: none;
    flex-direction: column;
    justify-content: flex-start;
  }
  .art {
    display: flex;
    align-items: flex-start;
    height: 41px;
    padding-top: 4px;
    margin-bottom: 3px;
  }
  .line {
    display: flex;
    align-items: center;
    gap: 4px;
    height: 20px;
  }
  .second {
    height: 21px;
  }
  .w52 { width: 52px; }
  .w60 { width: 60px; }
  .w72 { width: 72px; }
  .w76 { width: 76px; }
  .w88 { width: 88px; }
  .w96 { width: 96px; }
  .looks .body {
    padding-left: 4px;
  }
  .cells .body {
    padding-left: 5px;
  }
  .collapse {
    width: 32px;
    height: 20px;
    margin: auto 0 0 auto;
  }

  .formula {
    display: flex;
    flex: none;
    padding: 12px 5px 11px 6px;
  }
  .box {
    display: flex;
    align-items: center;
    height: 31px;
    border: 1px solid #7d7d7d;
    background: #a4a4a4;
  }
  .box input {
    flex: 1;
    min-width: 0;
    padding-bottom: 2px;
  }
  .name {
    width: 127px;
    padding: 0 8px 0 6px;
    font-family: Lato, sans-serif;
    font-size: 15px;
  }
  .dots {
    display: flex;
    align-items: center;
    justify-content: center;
    width: 37px;
  }
  .actions {
    width: 137px;
    margin-right: 3px;
  }
  .actions button {
    flex: 1;
  }
  .fx {
    color: #444;
    font: 700 22px/24px "Liberation Serif", serif;
  }
  .fx .x {
    font-size: 16px;
  }
  .value {
    flex: 1;
    padding: 0 5px 0 14px;
    font-family: Lato, sans-serif;
    font-size: 17px;
  }

  .area {
    display: flex;
    flex: 1;
    min-height: 0;
  }
  .sheet {
    position: relative;
    flex: 1;
    min-width: 0;
    overflow: hidden;
    border-right: 1px solid #6a6a6a;
  }
  table {
    width: calc(100% + 5px);
    border-spacing: 0;
    table-layout: fixed;
    color: #111;
    font: 17px/21px Lato, sans-serif;
  }
  th,
  td {
    height: 24px;
    padding: 2px 3px 0;
    overflow: hidden;
    border-right: 1px solid #8a8a8a;
    border-bottom: 1px solid #8a8a8a;
    text-align: left;
    white-space: nowrap;
  }
  th {
    padding: 2px 0 0;
    border-right-color: #6a6a6a;
    border-bottom-color: #6a6a6a;
    background: #979797;
    font-size: 15px;
    font-weight: 400;
    text-align: center;
  }
  .letter-head {
    border-right-color: #7f7f7f;
  }
  tbody th {
    border-bottom-color: #747474;
    background: linear-gradient(90deg, #8f8f8f, #979797 8px);
  }
  .corner {
    border-color: #979797 #979797 #6a6a6a;
  }
  .corner svg {
    margin: 1px 3px 3px auto;
  }
  .picked,
  tbody .picked {
    background: #8a8a8a;
    color: #225239;
  }
  td {
    background: #a6a6a6;
  }
  .lit {
    border-color: #d4d4d4;
    background: #fff;
    color: #000;
  }
  .num,
  .date {
    font-size: 15px;
  }
  .num {
    text-align: right;
  }
  .source {
    padding-right: 0;
    font-size: 16px;
  }
  .head {
    font-weight: 700;
  }
  .check {
    font-family: "DejaVu Sans", sans-serif;
    font-size: 18px;
  }
  .current {
    position: relative;
    overflow: visible;
  }
  .current::before {
    content: "";
    position: absolute;
    inset: -2px;
    border: 2px solid #217346;
    border-color: #225239 #217346 #217346 #225239;
  }
  .current::after {
    content: "";
    position: absolute;
    right: -3px;
    bottom: -3px;
    width: 5px;
    height: 5px;
    border: solid #fff;
    border-width: 1px 0 0 1px;
    background: #217346;
    box-sizing: content-box;
  }
  .tip {
    position: absolute;
    top: 562px;
    left: 612px;
    padding: 21px 20px 19px;
    border-radius: 20px;
    background: #212121;
    box-shadow: 4px 8px 20px rgba(0, 0, 0, 0.35);
    color: #fff;
    font: 700 35px/40px "Open Sans", sans-serif;
    white-space: nowrap;
  }
  .tip::before {
    content: "";
    position: absolute;
    top: -28px;
    left: 24px;
    border: solid transparent;
    border-width: 0 20px 21px;
    border-bottom-color: #212121;
  }

  .scroll {
    display: flex;
    flex-direction: column;
    flex: none;
    width: 24px;
    margin-bottom: -5px;
    padding: 2px 2px 0 3px;
  }
  .scroll button {
    height: 19px;
    border: 1px solid #7a7a7a;
    background: #a4a4a4;
  }
  .track {
    flex: 1;
    background: #8e8e8e;
  }
  .thumb {
    height: 85%;
    margin-top: 1px;
    border: 1px solid #6f6f6f;
    background: #a4a4a4;
  }
</style>
